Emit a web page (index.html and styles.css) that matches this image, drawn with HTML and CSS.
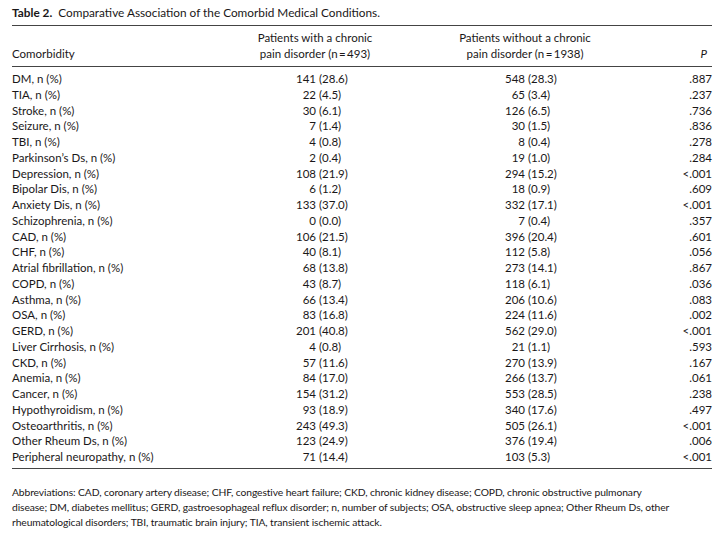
FILE: index.html
```html
<!DOCTYPE html>
<html>
<head>
<meta charset="utf-8">
<link rel="stylesheet" href="styles.css">
</head>
<body>
<div class="page">
  <div class="caption"><b>Table 2.</b>&nbsp; Comparative Association of the Comorbid Medical Conditions.</div>
  <div class="tbl">
    <div class="head">
      <div class="lab">Comorbidity</div>
      <div class="ctr">Patients with a chronic<br>pain disorder (n&thinsp;=&thinsp;493)</div>
      <div class="ctr">Patients without a chronic<br>pain disorder (n&thinsp;=&thinsp;1938)</div>
      <div class="pvh"><i>P</i></div>
    </div>
    <div class="body">
      <div class="row"><div>DM, n (%)</div><div class="a"><span class="n">141</span><span class="p">(28.6)</span></div><div class="b"><span class="n">548</span><span class="p">(28.3)</span></div><div class="pv">.887</div></div>
      <div class="row"><div>TIA, n (%)</div><div class="a"><span class="n">22</span><span class="p">(4.5)</span></div><div class="b"><span class="n">65</span><span class="p">(3.4)</span></div><div class="pv">.237</div></div>
      <div class="row"><div>Stroke, n (%)</div><div class="a"><span class="n">30</span><span class="p">(6.1)</span></div><div class="b"><span class="n">126</span><span class="p">(6.5)</span></div><div class="pv">.736</div></div>
      <div class="row"><div>Seizure, n (%)</div><div class="a"><span class="n">7</span><span class="p">(1.4)</span></div><div class="b"><span class="n">30</span><span class="p">(1.5)</span></div><div class="pv">.836</div></div>
      <div class="row"><div>TBI, n (%)</div><div class="a"><span class="n">4</span><span class="p">(0.8)</span></div><div class="b"><span class="n">8</span><span class="p">(0.4)</span></div><div class="pv">.278</div></div>
      <div class="row"><div>Parkinson’s Ds, n (%)</div><div class="a"><span class="n">2</span><span class="p">(0.4)</span></div><div class="b"><span class="n">19</span><span class="p">(1.0)</span></div><div class="pv">.284</div></div>
      <div class="row"><div>Depression, n (%)</div><div class="a"><span class="n">108</span><span class="p">(21.9)</span></div><div class="b"><span class="n">294</span><span class="p">(15.2)</span></div><div class="pv">&lt;.001</div></div>
      <div class="row"><div>Bipolar Dis, n (%)</div><div class="a"><span class="n">6</span><span class="p">(1.2)</span></div><div class="b"><span class="n">18</span><span class="p">(0.9)</span></div><div class="pv">.609</div></div>
      <div class="row"><div>Anxiety Dis, n (%)</div><div class="a"><span class="n">133</span><span class="p">(37.0)</span></div><div class="b"><span class="n">332</span><span class="p">(17.1)</span></div><div class="pv">&lt;.001</div></div>
      <div class="row"><div>Schizophrenia, n (%)</div><div class="a"><span class="n">0</span><span class="p">(0.0)</span></div><div class="b"><span class="n">7</span><span class="p">(0.4)</span></div><div class="pv">.357</div></div>
      <div class="row"><div>CAD, n (%)</div><div class="a"><span class="n">106</span><span class="p">(21.5)</span></div><div class="b"><span class="n">396</span><span class="p">(20.4)</span></div><div class="pv">.601</div></div>
      <div class="row"><div>CHF, n (%)</div><div class="a"><span class="n">40</span><span class="p">(8.1)</span></div><div class="b"><span class="n">112</span><span class="p">(5.8)</span></div><div class="pv">.056</div></div>
      <div class="row"><div>Atrial fibrillation, n (%)</div><div class="a"><span class="n">68</span><span class="p">(13.8)</span></div><div class="b"><span class="n">273</span><span class="p">(14.1)</span></div><div class="pv">.867</div></div>
      <div class="row"><div>COPD, n (%)</div><div class="a"><span class="n">43</span><span class="p">(8.7)</span></div><div class="b"><span class="n">118</span><span class="p">(6.1)</span></div><div class="pv">.036</div></div>
      <div class="row"><div>Asthma, n (%)</div><div class="a"><span class="n">66</span><span class="p">(13.4)</span></div><div class="b"><span class="n">206</span><span class="p">(10.6)</span></div><div class="pv">.083</div></div>
      <div class="row"><div>OSA, n (%)</div><div class="a"><span class="n">83</span><span class="p">(16.8)</span></div><div class="b"><span class="n">224</span><span class="p">(11.6)</span></div><div class="pv">.002</div></div>
      <div class="row"><div>GERD, n (%)</div><div class="a"><span class="n">201</span><span class="p">(40.8)</span></div><div class="b"><span class="n">562</span><span class="p">(29.0)</span></div><div class="pv">&lt;.001</div></div>
      <div class="row"><div>Liver Cirrhosis, n (%)</div><div class="a"><span class="n">4</span><span class="p">(0.8)</span></div><div class="b"><span class="n">21</span><span class="p">(1.1)</span></div><div class="pv">.593</div></div>
      <div class="row"><div>CKD, n (%)</div><div class="a"><span class="n">57</span><span class="p">(11.6)</span></div><div class="b"><span class="n">270</span><span class="p">(13.9)</span></div><div class="pv">.167</div></div>
      <div class="row"><div>Anemia, n (%)</div><div class="a"><span class="n">84</span><span class="p">(17.0)</span></div><div class="b"><span class="n">266</span><span class="p">(13.7)</span></div><div class="pv">.061</div></div>
      <div class="row"><div>Cancer, n (%)</div><div class="a"><span class="n">154</span><span class="p">(31.2)</span></div><div class="b"><span class="n">553</span><span class="p">(28.5)</span></div><div class="pv">.238</div></div>
      <div class="row"><div>Hypothyroidism, n (%)</div><div class="a"><span class="n">93</span><span class="p">(18.9)</span></div><div class="b"><span class="n">340</span><span class="p">(17.6)</span></div><div class="pv">.497</div></div>
      <div class="row"><div>Osteoarthritis, n (%)</div><div class="a"><span class="n">243</span><span class="p">(49.3)</span></div><div class="b"><span class="n">505</span><span class="p">(26.1)</span></div><div class="pv">&lt;.001</div></div>
      <div class="row"><div>Other Rheum Ds, n (%)</div><div class="a"><span class="n">123</span><span class="p">(24.9)</span></div><div class="b"><span class="n">376</span><span class="p">(19.4)</span></div><div class="pv">.006</div></div>
      <div class="row"><div>Peripheral neuropathy, n (%)</div><div class="a"><span class="n">71</span><span class="p">(14.4)</span></div><div class="b"><span class="n">103</span><span class="p">(5.3)</span></div><div class="pv">&lt;.001</div></div>
    </div>
  </div>
  <p class="note">Abbreviations: CAD, coronary artery disease; CHF, congestive heart failure; CKD, chronic kidney disease; COPD, chronic obstructive pulmonary<br>disease; DM, diabetes mellitus; GERD, gastroesophageal reflux disorder; n, number of subjects; OSA, obstructive sleep apnea; Other Rheum Ds, other<br>rheumatological disorders; TBI, traumatic brain injury; TIA, transient ischemic attack.</p>
</div>
</body>
</html>
```

FILE: styles.css
```css
html, body {
  margin: 0;
  padding: 0;
  background: #ffffff;
}
body {
  font-family: "Lato", "Open Sans", sans-serif;
  color: #1a1718;
}
.page {
  padding: 0 12px;
  width: 700px;
}
.caption {
  font-size: 11.8px;
  line-height: 16px;
  padding-top: 5px;
  padding-bottom: 4px;
  border-bottom: 1px solid #444;
}
.caption b {
  font-weight: 700;
}
.tbl {
  font-size: 11.5px;
}
.head,
.row {
  display: grid;
  grid-template-columns: 238px 130px 290px 42px;
}
.head {
  line-height: 16px;
  padding: 4px 0;
  align-items: end;
  border-bottom: 1px solid #444;
}
.lab { text-align: left; }
.ctr { text-align: center; }
.pvh {
  text-align: right;
  padding-right: 5px;
}
.body {
  padding: 4px 0 3px 0;
  border-bottom: 1px solid #444;
}
.row {
  line-height: 15.75px;
  height: 15.75px;
  white-space: nowrap;
}
.pv { text-align: right; }
.a,
.b {
  display: flex;
}
.n {
  text-align: right;
  flex: none;
}
.a .n { width: 66px; }
.b .n { width: 145px; }
.p {
  padding-left: 3px;
}
.note {
  margin: 16px 0 0 0;
  font-size: 10.3px;
  line-height: 15px;
  letter-spacing: -0.1px;
}
```
